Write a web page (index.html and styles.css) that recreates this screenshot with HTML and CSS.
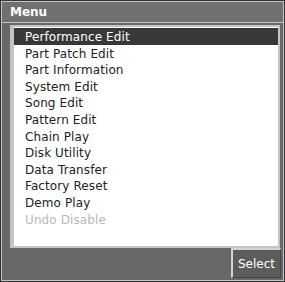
FILE: index.html
```html
<!DOCTYPE html>
<html>
<head>
<meta charset="utf-8">
<link rel="stylesheet" href="styles.css">
</head>
<body>
<div class="screen">
  <div class="inner">
    <div class="title">Menu</div>
    <div class="list">
      <div class="item sel">Performance Edit</div>
      <div class="item">Part Patch Edit</div>
      <div class="item">Part Information</div>
      <div class="item">System Edit</div>
      <div class="item">Song Edit</div>
      <div class="item">Pattern Edit</div>
      <div class="item">Chain Play</div>
      <div class="item">Disk Utility</div>
      <div class="item">Data Transfer</div>
      <div class="item">Factory Reset</div>
      <div class="item">Demo Play</div>
      <div class="item dis">Undo Disable</div>
    </div>
    <div class="bar">
      <div class="btn">Select</div>
    </div>
  </div>
</div>
</body>
</html>
```
FILE: styles.css
```css
html, body { margin: 0; padding: 0; background: #fff; }
.screen {
  width: 285px; height: 282px; box-sizing: border-box;
  border: 1px solid #333;
  font-family: "DejaVu Sans", sans-serif;
}
.inner {
  height: 100%; box-sizing: border-box;
  border: 1px solid #c4c4c4;
  background: #686868;
  display: flex; flex-direction: column;
}
.title {
  height: 21px; box-sizing: border-box; flex: none;
  border-bottom: 1px solid #c4c4c4;
  background: #707070; color: #fff;
  font-weight: bold; font-size: 12px; line-height: 21px;
  padding-left: 8px;
}
.list {
  flex: none;
  margin: 2px 3px 0 8px;
  height: 223px; box-sizing: border-box;
  background: #fff;
  border-left: 4px solid #c4c4c4;
  border-right: 2px solid #c4c4c4;
  border-bottom: 2px solid #c4c4c4;
  border-top: 2px solid #c4c4c4;
  padding-top: 1px;
}
.item {
  height: 16.6px; line-height: 19px; box-sizing: border-box;
  font-size: 12px; color: #222; padding-left: 11px;
  letter-spacing: 0.1px; overflow: hidden;
}
.item.sel { background: #383838; color: #fff; }
.item.dis { color: #b8b8b8; }
.bar { flex: 1; display: flex; justify-content: flex-end; align-items: flex-start; padding-right: 2px; }
.btn {
  width: 50px; height: 30px; box-sizing: border-box;
  border-top: 2px solid #d4d4d4; border-left: 2px solid #d4d4d4;
  border-right: 1px solid #444; border-bottom: 1px solid #444;
  background: #5c5c5c; color: #fff; font-size: 12px;
  display: flex; align-items: center; justify-content: center;
}
```
